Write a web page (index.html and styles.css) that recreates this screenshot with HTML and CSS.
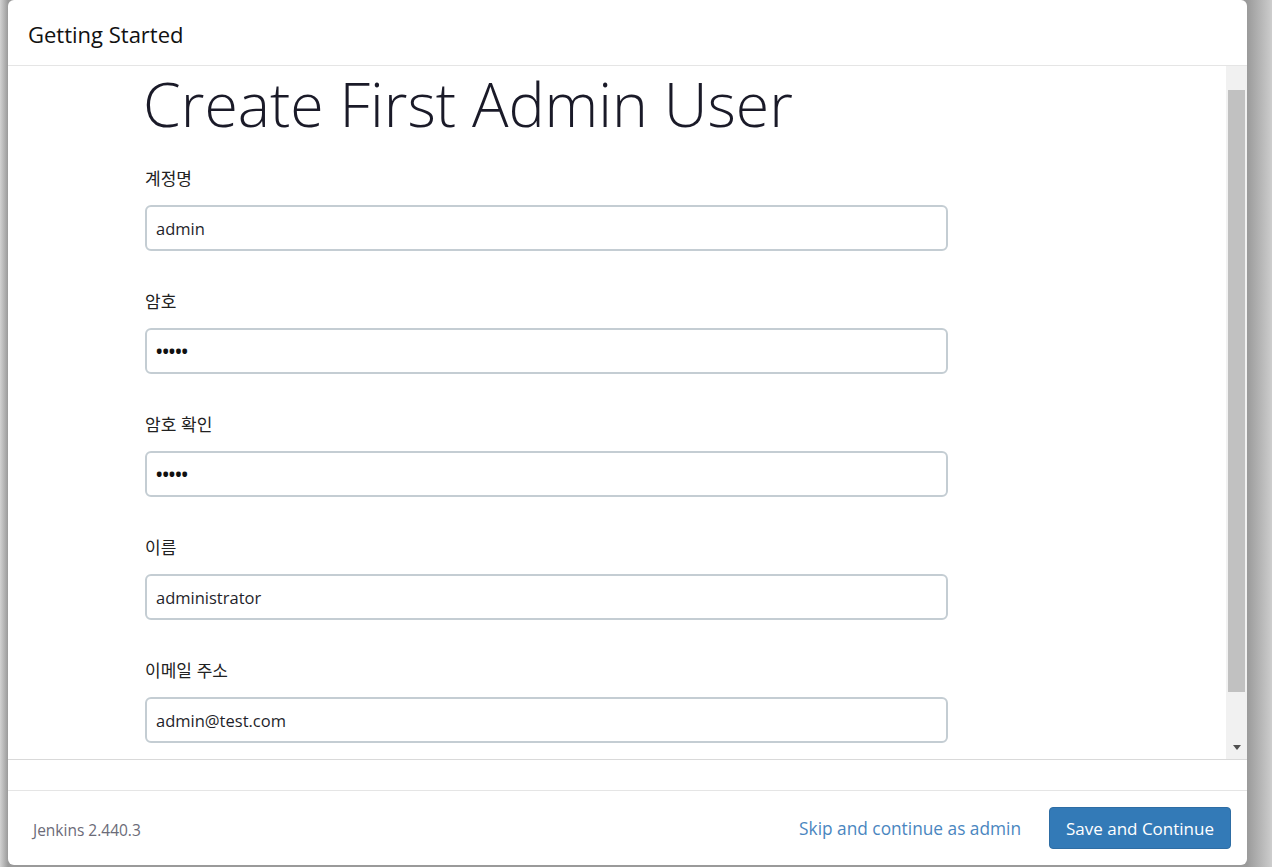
FILE: index.html
```html
<!DOCTYPE html>
<html lang="ko">
<head>
<meta charset="utf-8">
<title>Getting Started</title>
<link rel="stylesheet" href="styles.css">
</head>
<body>
<div class="backdrop">
  <div class="modal">
    <div class="modal-header">
      <h4 class="modal-title">Getting Started</h4>
    </div>
    <div class="modal-body">
      <div class="scroll-content">
        <h1 class="page-title">Create First Admin User</h1>
        <form class="admin-form">
          <div class="field">
            <label class="field-label">계정명</label>
            <div class="field-input">admin</div>
          </div>
          <div class="field">
            <label class="field-label">암호</label>
            <div class="field-input dots">•••••</div>
          </div>
          <div class="field">
            <label class="field-label">암호 확인</label>
            <div class="field-input dots">•••••</div>
          </div>
          <div class="field">
            <label class="field-label">이름</label>
            <div class="field-input">administrator</div>
          </div>
          <div class="field">
            <label class="field-label">이메일 주소</label>
            <div class="field-input">admin@test.com</div>
          </div>
        </form>
      </div>
      <div class="scrollbar">
        <div class="scroll-btn"></div>
        <div class="scroll-track"><div class="scroll-thumb"></div></div>
        <div class="scroll-btn down"><span class="arrow-down"></span></div>
      </div>
    </div>
    <div class="modal-spacer"></div>
    <div class="modal-footer">
      <span class="version">Jenkins 2.440.3</span>
      <div class="actions">
        <a class="skip-link" href="#">Skip and continue as admin</a>
        <button class="btn-primary" type="button">Save and Continue</button>
      </div>
    </div>
  </div>
</div>
</body>
</html>
```

FILE: styles.css
```css
html, body {
  margin: 0;
  padding: 0;
  height: 100%;
  overflow: hidden;
}
body {
  background: linear-gradient(to right, #d2d2d2 0px, #9a9a9a 8px, #9a9a9a 1247px, #cdcdcd 1272px);
  font-family: "Open Sans", "Noto Sans CJK KR", sans-serif;
  color: #222;
}
.backdrop {
  padding: 0 25px 0 8px;
  height: 867px;
  box-sizing: border-box;
}
.modal {
  height: 865px;
  background: #fff;
  border-radius: 6px;
  display: flex;
  flex-direction: column;
  overflow: hidden;
}
.modal-header {
  height: 66px;
  flex: none;
  display: flex;
  align-items: center;
  padding: 2px 20px 0;
  box-sizing: border-box;
  border-bottom: 1px solid #e5e5e5;
}
.modal-title {
  margin: 0;
  font-size: 22px;
  font-weight: 400;
  color: #111;
}
.modal-body {
  height: 693px;
  flex: none;
  display: flex;
  border-bottom: 1px solid #d9d9d9;
}
.scroll-content {
  flex: 1;
  padding-left: 135px;
}
.page-title {
  margin: 0;
  font-size: 60.8px;
  line-height: 76px;
  font-weight: 300;
  color: #1a1a28;
  white-space: nowrap;
}
.admin-form {
  display: flex;
  flex-direction: column;
  gap: 39px;
  margin: 25px 0 0 2px;
}
.field {
  display: flex;
  flex-direction: column;
  gap: 16px;
}
.field-label {
  font-family: "Noto Sans CJK KR", sans-serif;
  font-size: 17px;
  line-height: 22px;
  color: #222;
}
.field-input {
  width: 803px;
  height: 46px;
  box-sizing: border-box;
  border: 2px solid #c4cdd3;
  border-radius: 6px;
  padding: 0 9px;
  display: flex;
  align-items: center;
  font-size: 16.5px;
  color: #1f1f2b;
}
.field-input.dots {
  font-size: 17px;
  font-weight: 700;
  color: #111;
}
.scrollbar {
  width: 21px;
  flex: none;
  background: #f1f1f1;
  display: flex;
  flex-direction: column;
}
.scroll-btn {
  height: 24px;
  flex: none;
  display: flex;
  align-items: center;
  justify-content: center;
}
.scroll-track {
  flex: 1;
  padding: 0 2px;
}
.scroll-thumb {
  height: 602px;
  background: #c1c1c1;
}
.arrow-down {
  width: 0;
  height: 0;
  border-left: 4px solid transparent;
  border-right: 4px solid transparent;
  border-top: 5px solid #505050;
}
.modal-spacer {
  height: 30px;
  flex: none;
  border-bottom: 1px solid #e5e5e5;
}
.modal-footer {
  flex: 1;
  display: flex;
  align-items: center;
  justify-content: space-between;
  padding: 0 16px 0 25px;
}
.version {
  font-size: 15.5px;
  color: #6b6b78;
  padding-top: 4px;
}
.actions {
  display: flex;
  align-items: center;
  gap: 28px;
}
.skip-link {
  font-size: 17.3px;
  color: #4a86c0;
  text-decoration: none;
}
.btn-primary {
  width: 182px;
  height: 42px;
  background: #337ab7;
  border: 1px solid #2e6da4;
  border-radius: 4px;
  color: #fff;
  font-family: "Open Sans", sans-serif;
  font-size: 17px;
  padding: 0;
}
```
